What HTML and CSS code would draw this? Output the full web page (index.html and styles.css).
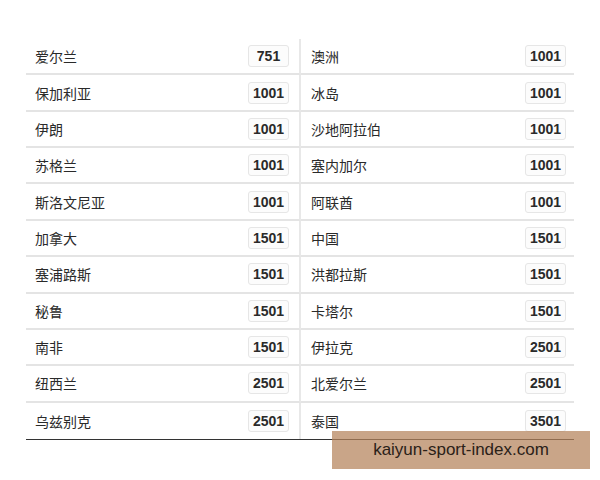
FILE: index.html
```html
<!DOCTYPE html>
<html lang="zh">
<head>
<meta charset="utf-8">
<link rel="stylesheet" href="styles.css">
</head>
<body>
<div class="page">
  <div class="table">
    <div class="cell left"><span class="name">爱尔兰</span><span class="num">751</span></div>
    <div class="cell right"><span class="name">澳洲</span><span class="num">1001</span></div>
    <div class="cell left"><span class="name">保加利亚</span><span class="num">1001</span></div>
    <div class="cell right"><span class="name">冰岛</span><span class="num">1001</span></div>
    <div class="cell left"><span class="name">伊朗</span><span class="num">1001</span></div>
    <div class="cell right"><span class="name">沙地阿拉伯</span><span class="num">1001</span></div>
    <div class="cell left"><span class="name">苏格兰</span><span class="num">1001</span></div>
    <div class="cell right"><span class="name">塞内加尔</span><span class="num">1001</span></div>
    <div class="cell left"><span class="name">斯洛文尼亚</span><span class="num">1001</span></div>
    <div class="cell right"><span class="name">阿联酋</span><span class="num">1001</span></div>
    <div class="cell left"><span class="name">加拿大</span><span class="num">1501</span></div>
    <div class="cell right"><span class="name">中国</span><span class="num">1501</span></div>
    <div class="cell left"><span class="name">塞浦路斯</span><span class="num">1501</span></div>
    <div class="cell right"><span class="name">洪都拉斯</span><span class="num">1501</span></div>
    <div class="cell left"><span class="name">秘鲁</span><span class="num">1501</span></div>
    <div class="cell right"><span class="name">卡塔尔</span><span class="num">1501</span></div>
    <div class="cell left"><span class="name">南非</span><span class="num">1501</span></div>
    <div class="cell right"><span class="name">伊拉克</span><span class="num">2501</span></div>
    <div class="cell left"><span class="name">纽西兰</span><span class="num">2501</span></div>
    <div class="cell right"><span class="name">北爱尔兰</span><span class="num">2501</span></div>
    <div class="cell left last"><span class="name">乌兹别克</span><span class="num">2501</span></div>
    <div class="cell right last"><span class="name">泰国</span><span class="num">3501</span></div>
  </div>
  <div class="watermark">kaiyun-sport-index.com</div>
</div>
</body>
</html>
```
FILE: styles.css
```css
html, body {
  margin: 0;
  padding: 0;
  background: #ffffff;
}
body {
  font-family: "Liberation Sans", "Noto Sans CJK SC", sans-serif;
  color: #333333;
}
.page {
  position: relative;
  width: 600px;
  height: 480px;
  padding: 39px 0 0 26px;
  box-sizing: border-box;
}
.table {
  width: 548px;
  display: grid;
  grid-template-columns: 275px 273px;
  border-bottom: 1px solid #333333;
}
.cell {
  height: 36.36px;
  box-sizing: border-box;
  display: flex;
  align-items: center;
  justify-content: space-between;
  border-bottom: 2px solid #e4e4e4;
}
.cell.last {
  border-bottom: none;
}
.left {
  padding: 0 10px 0 9px;
  border-right: 2px solid #e8e8e8;
}
.right {
  padding: 0 8px 0 10px;
}
.name {
  font-size: 14px;
  font-family: "Noto Sans CJK SC", sans-serif;
  color: #2a2a2a;
}
.num {
  width: 41px;
  height: 22px;
  box-sizing: border-box;
  border: 1px solid #e6e6e6;
  border-radius: 3px;
  background: #fcfcfc;
  font-size: 14px;
  font-weight: bold;
  line-height: 20px;
  text-align: center;
  color: #2a2a2a;
}
.watermark {
  position: absolute;
  left: 332px;
  top: 431px;
  width: 258px;
  height: 38px;
  background: rgba(180, 130, 90, 0.72);
  color: #2b2118;
  font-family: "Liberation Sans", sans-serif;
  font-size: 17px;
  line-height: 38px;
  text-align: center;
}
```
